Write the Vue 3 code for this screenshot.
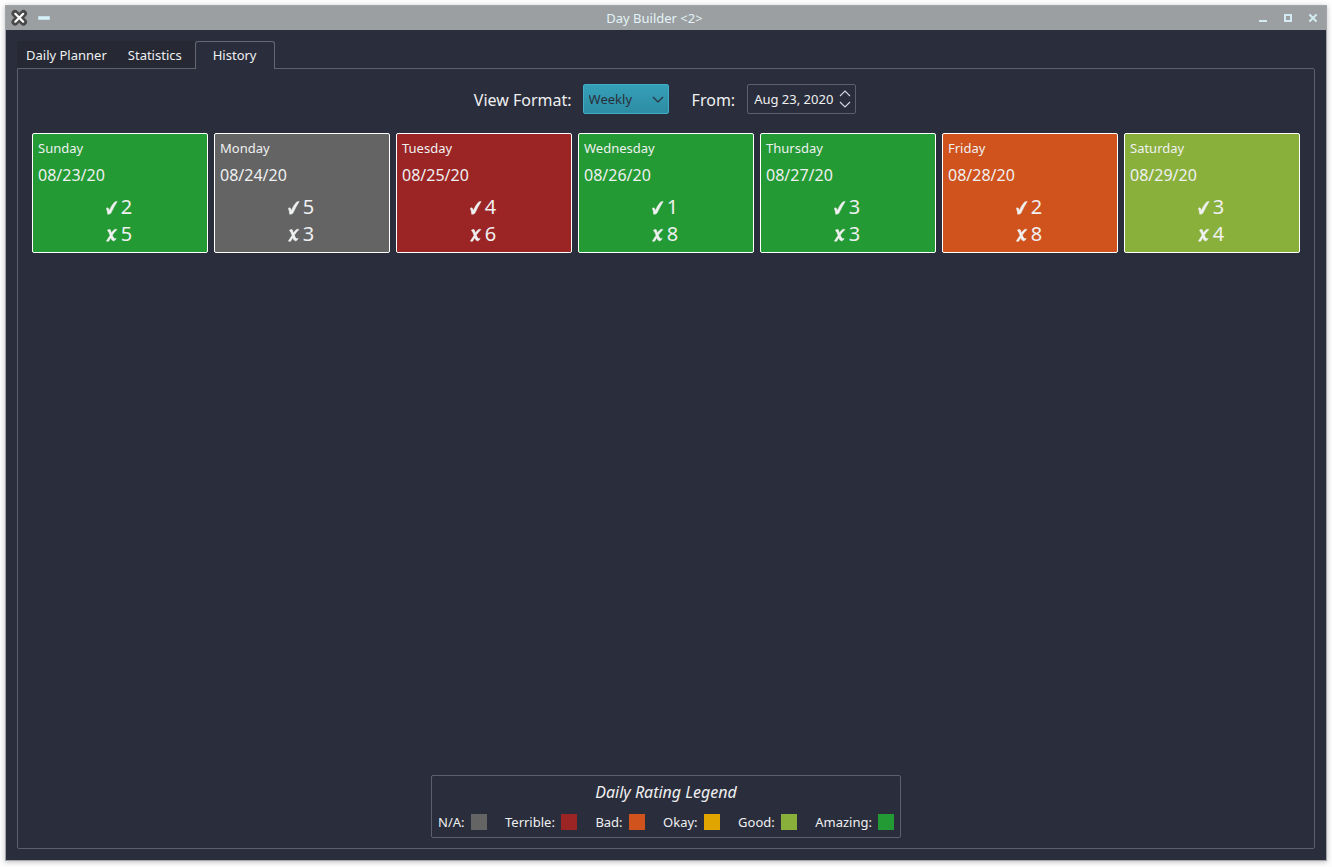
<script setup>
import { ref } from 'vue'

const tabs = ['Daily Planner', 'Statistics', 'History']
const activeTab = ref('History')
const format = ref('Weekly')
const from = ref('Aug 23, 2020')

const days = [
  { name: 'Sunday', date: '08/23/20', done: 2, missed: 5, rating: 'amazing' },
  { name: 'Monday', date: '08/24/20', done: 5, missed: 3, rating: 'none' },
  { name: 'Tuesday', date: '08/25/20', done: 4, missed: 6, rating: 'terrible' },
  { name: 'Wednesday', date: '08/26/20', done: 1, missed: 8, rating: 'amazing' },
  { name: 'Thursday', date: '08/27/20', done: 3, missed: 3, rating: 'amazing' },
  { name: 'Friday', date: '08/28/20', done: 2, missed: 8, rating: 'bad' },
  { name: 'Saturday', date: '08/29/20', done: 3, missed: 4, rating: 'good' },
]

const legend = [
  { label: 'N/A:', rating: 'none' },
  { label: 'Terrible:', rating: 'terrible' },
  { label: 'Bad:', rating: 'bad' },
  { label: 'Okay:', rating: 'okay' },
  { label: 'Good:', rating: 'good' },
  { label: 'Amazing:', rating: 'amazing' },
]
</script>

<template>
  <div class="desktop">
    <div class="window">
      <header class="titlebar">
        <div class="controls left">
          <button class="app-icon" aria-label="Window menu">
            <svg width="18" height="18" viewBox="0 0 18 18" fill="none" stroke-linecap="round">
              <path d="M5 4.5 L13.5 13 M13.5 4.5 L5 13" stroke="#484848" stroke-width="7" />
              <path d="M5.3 4.8 L13.2 12.7 M13.2 4.8 L5.3 12.7" stroke="#ffffff" stroke-width="2.2" />
            </svg>
          </button>
          <button class="control pin" aria-label="Keep on all desktops">
            <svg width="12" height="4" viewBox="0 0 12 4"><rect width="12" height="4" rx="1" fill="#c5e0e9" /><rect x="1" y="1" width="10" height="2" fill="#d8f0f8" /></svg>
          </button>
        </div>
        <h1 class="title">Day Builder &lt;2&gt;</h1>
        <div class="controls right">
          <button class="control" aria-label="Minimize">
            <svg width="8" height="8" viewBox="0 0 8 8"><rect y="6" width="8" height="2" fill="#d3ebf2" /></svg>
          </button>
          <button class="control" aria-label="Maximize">
            <svg width="8" height="8" viewBox="0 0 8 8"><rect x="1" y="1" width="6" height="6" fill="none" stroke="#d3ebf2" stroke-width="2" /></svg>
          </button>
          <button class="control" aria-label="Close">
            <svg width="8" height="8" viewBox="0 0 8 8"><path d="M1 1 L7 7 M7 1 L1 7" stroke="#d3ebf2" stroke-width="2" stroke-linecap="square" /></svg>
          </button>
        </div>
      </header>

      <main class="content">
        <nav class="tabs" role="tablist">
          <button
            v-for="tab in tabs"
            :key="tab"
            class="tab"
            :class="{ active: tab === activeTab }"
            role="tab"
            :aria-selected="tab === activeTab"
            @click="activeTab = tab"
          >{{ tab }}</button>
        </nav>

        <section class="panel">
          <form class="filters" @submit.prevent>
            <label for="format">View Format:</label>
            <div class="combo">
              <select id="format" v-model="format">
                <option>Weekly</option>
                <option>Monthly</option>
              </select>
              <svg class="chevron" width="12" height="7" viewBox="0 0 12 7"><path d="M1 1 L6 6 L11 1" fill="none" stroke="#2a2d3b" stroke-width="1.1" /></svg>
            </div>
            <label class="from" for="from">From:</label>
            <div class="datebox">
              <input id="from" v-model="from" type="text">
              <div class="steps">
                <button type="button" aria-label="Later">
                  <svg width="12" height="7" viewBox="0 0 12 7"><path d="M1 6 L6 1 L11 6" fill="none" stroke="#d3dae3" stroke-width="1.1" /></svg>
                </button>
                <button type="button" aria-label="Earlier">
                  <svg width="12" height="7" viewBox="0 0 12 7"><path d="M1 1 L6 6 L11 1" fill="none" stroke="#d3dae3" stroke-width="1.1" /></svg>
                </button>
              </div>
            </div>
          </form>

          <div class="week">
            <article v-for="day in days" :key="day.date" class="day" :class="day.rating">
              <h2>{{ day.name }}</h2>
              <p class="date">{{ day.date }}</p>
              <p class="count first">
                <svg class="mark" width="12" height="14" viewBox="0 0 12 14" role="img" aria-label="Completed">
                  <path d="M.4 7.2 Q1.8 6.2 2.5 7.4 L3.3 9.4 Q5.6 4.4 8.4 1.2 Q9.6 .3 11.2 .5 Q7.8 5.8 5 12 Q3.6 13.6 1.7 13.2 Q1.5 10.2 .4 7.2 Z" />
                </svg>
                <span>{{ day.done }}</span>
              </p>
              <p class="count">
                <svg class="mark" width="12" height="14" viewBox="0 0 12 14" role="img" aria-label="Missed">
                  <path d="M1.4 2.2 Q2.8 1 4.1 1.6 Q4.9 3 5.3 5 Q7.4 2 8.6 1.4 Q9.8 1 11 1.5 Q8 4.4 6.3 7.1 Q7.2 9.8 8.4 10.6 Q9.2 10.9 10.2 10.3 Q9.4 12.5 7.8 13 Q5.9 13 4.7 9.7 Q3.6 11.8 2.6 13.2 Q1.3 13.7 .4 13.1 Q2 10.5 4 7.6 Q3.1 4 1.4 2.2 Z" />
                </svg>
                <span>{{ day.missed }}</span>
              </p>
            </article>
          </div>

          <section class="legend">
            <h2>Daily Rating Legend</h2>
            <ul>
              <li v-for="item in legend" :key="item.rating">
                {{ item.label }}<span class="swatch" :class="item.rating"></span>
              </li>
            </ul>
          </section>
        </section>
      </main>
    </div>
  </div>
</template>

<style>
body {
  margin: 0;
  background: #fdfdfd;
}
</style>

<style scoped>
* {
  box-sizing: border-box;
}

.desktop {
  min-height: 100vh;
  display: flex;
  padding: 5px 5px 6px;
  font-family: "Noto Sans", sans-serif;
  font-size: 13px;
  line-height: 18px;
  color: #eff0f1;
}

h1, h2, p, ul {
  margin: 0;
  padding: 0;
  font-weight: 400;
}

button, input, select {
  margin: 0;
  padding: 0;
  border: 0;
  background: none;
  font: inherit;
  color: inherit;
}

.window {
  flex: 1;
  display: flex;
  flex-direction: column;
  border: 1px solid #a4a5ab;
  background: #2a2d3b;
  box-shadow: 0 1px 5px rgba(0, 0, 0, 0.25);
}

.titlebar {
  height: 24px;
  display: grid;
  grid-template-columns: 1fr auto 1fr;
  align-items: center;
  padding: 0 9px 0 4px;
  background: #9b9fa1;
}

.title {
  margin-right: 18px;
  font-size: 13px;
  line-height: 18px;
  color: #e3f3f8;
}

.controls {
  display: flex;
  align-items: center;
}

.left {
  gap: 10px;
}

.right {
  justify-content: flex-end;
  gap: 17px;
}

.controls button {
  display: flex;
}

.content {
  flex: 1;
  display: flex;
  flex-direction: column;
  padding: 11px;
}

.tabs {
  display: flex;
  align-items: flex-end;
}

.tab {
  height: 27px;
  padding: 0 8px 0 9px;
  border: 1px solid #262934;
  border-width: 1px 1px 0 0;
  background: #262934;
}

.tab:nth-child(2) {
  padding: 0 12px;
}

.tab.active {
  position: relative;
  height: 28px;
  padding: 0 17px 1px;
  border: 1px solid #656772;
  border-bottom: 0;
  border-radius: 3px 3px 0 0;
  background: #2a2d3b;
  margin-bottom: -1px;
}

.panel {
  flex: 1;
  display: flex;
  flex-direction: column;
  padding: 15px 14px 10px;
  border: 1px solid #5d5f6b;
  border-radius: 0 2px 2px 2px;
}

.filters {
  display: flex;
  align-items: center;
  justify-content: center;
  padding-right: 2px;
  font-size: 16px;
  line-height: 22px;
}

.filters label {
  padding-top: 2px;
}

.combo {
  position: relative;
  display: flex;
  margin-left: 11px;
  font-size: 13px;
}

.combo select {
  appearance: none;
  width: 86px;
  height: 30px;
  padding: 0 24px 0 5px;
  border: 1px solid #3daec6;
  border-radius: 2px;
  background: linear-gradient(#35a0b8, #2d8ca2);
  color: #2a2d3b;
}

.chevron {
  position: absolute;
  right: 5px;
  top: 12px;
  pointer-events: none;
}

.from {
  margin-left: 23px;
}

.datebox {
  display: flex;
  align-items: center;
  width: 109px;
  height: 30px;
  margin-left: 12px;
  padding: 0 4px 0 6px;
  border: 1px solid #5d5f6b;
  border-radius: 2px;
  font-size: 13px;
}

.datebox input {
  flex: 1;
  min-width: 0;
}

.steps {
  display: flex;
  flex-direction: column;
  gap: 4px;
}

.steps button {
  display: flex;
}

.week {
  display: grid;
  grid-template-columns: repeat(7, 1fr);
  gap: 6px;
  margin-top: 19px;
}

.day {
  height: 120px;
  padding: 5px;
  border: 1px solid #ffffff;
  border-radius: 2px;
}

.day h2 {
  font-size: 13px;
  line-height: 18px;
}

.date {
  margin-top: 6px;
  font-size: 16px;
  line-height: 24px;
}

.count {
  display: flex;
  align-items: center;
  justify-content: center;
  gap: 3px;
  padding-right: 2px;
  font-size: 20px;
  line-height: 27px;
}

.count.first {
  margin-top: 6px;
}

.mark {
  margin-top: 2px;
  fill: #eff0f1;
  stroke: #eff0f1;
  stroke-width: 0.5;
}

.none { background: #646464; }
.terrible { background: #9b2525; }
.bad { background: #d0531d; }
.okay { background: #e1a500; }
.good { background: #8ab03c; }
.amazing { background: #239a33; }

.legend {
  align-self: center;
  min-width: 470px;
  margin-top: auto;
  padding: 5px 6px 6px;
  border: 1px solid #5d5f6b;
  border-radius: 2px;
}

.legend h2 {
  font-size: 16px;
  font-style: italic;
  line-height: 22px;
  text-align: center;
}

.legend ul {
  display: flex;
  justify-content: space-between;
  margin-top: 10px;
  list-style: none;
}

.legend li {
  display: flex;
  align-items: center;
  gap: 6px;
}

.swatch {
  width: 16px;
  height: 16px;
}
</style>
